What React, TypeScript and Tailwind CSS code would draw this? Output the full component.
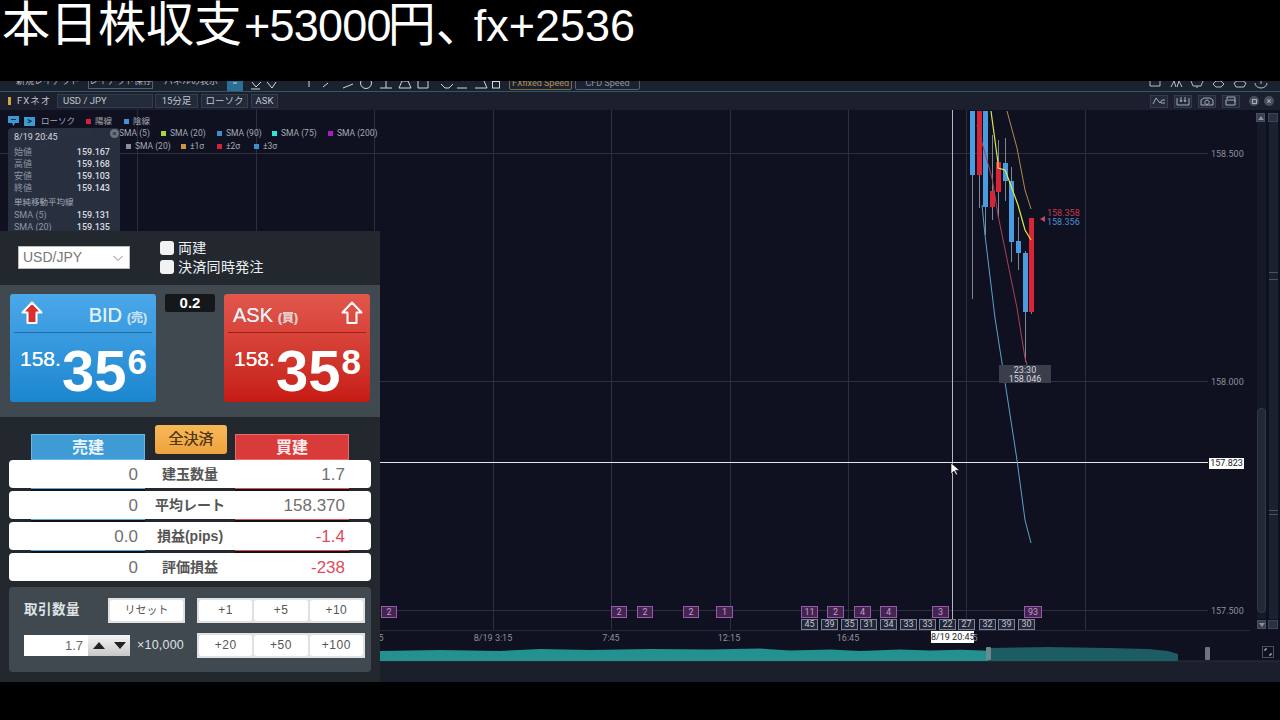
import React from "react";

const sans = "font-['Liberation_Sans','Noto_Sans_CJK_JP',sans-serif]";
const robo = "font-['Roboto','Noto_Sans_CJK_JP',sans-serif]";

const vlines = [137.5, 256.5, 374.5, 493.5, 611.5, 730.5, 848.5, 966.5, 1085.5];
const hlines = [153.5, 381.5, 610.5];
type C = [number, number, number, number, number, number, string];
const candles: C[] = [
  [972.5, 111, 299, 111, 175, 5, "b"],
  [979.5, 111, 208, 111, 175, 5, "r"],
  [985.5, 111, 235, 111, 207, 5, "b"],
  [992.5, 135, 220, 191, 207, 5, "r"],
  [998.5, 140, 217, 162, 192, 5, "r"],
  [1005.5, 138, 201, 163, 181, 5, "b"],
  [1011.5, 167, 262, 181, 242, 5, "b"],
  [1018.5, 217, 270, 241, 253, 5, "b"],
  [1025.5, 251, 362, 253, 312, 5, "b"],
  [1031.5, 218, 314, 218, 312, 5, "r"],
];
const purple: [number, string, number][] = [
  [381, "2", 16], [611, "2", 16], [637, "2", 16], [683, "2", 16], [716, "1", 17],
  [801, "11", 17], [827, "2", 17], [854, "4", 17], [880, "4", 17], [932, "3", 17], [1024, "93", 18],
];
const gray: [number, string][] = [
  [801, "45"], [821, "39"], [841, "35"], [860, "31"], [880, "34"], [900, "33"],
  [919, "33"], [939, "22"], [958, "27"], [979, "32"], [998, "39"], [1018, "30"],
];
const times: [number, string][] = [[381, "5"], [493, "8/19 3:15"], [611, "7:45"], [729, "12:15"], [848, "16:45"], [975, "5"]];
const prices: [number, string][] = [[154, "158.500"], [382, "158.000"], [611, "157.500"]];

function Legend({ c, t, w }: { c: string; t: string; w: number }) {
  return (
    <span className="flex items-center gap-[4px]" style={{ width: w }}>
      <i className="block w-[5px] h-[5px]" style={{ background: c }} />
      <span>{t}</span>
    </span>
  );
}

function Chart() {
  return (
    <>
      <svg className="absolute left-0 top-0" width="1280" height="572" viewBox="0 110 1280 572">
        {hlines.map((y) => <line key={y} x1="0" x2="1208" y1={y} y2={y} stroke="#2c2f3e" />)}
        {vlines.map((x) => <line key={x} x1={x} x2={x} y1="110" y2="630" stroke="#2c2f3e" />)}
        <line x1="380" x2="1250" y1="630.5" y2="630.5" stroke="#252836" />
        <line x1="952.5" x2="952.5" y1="110" y2="630" stroke="#b4b7be" />
        <line x1="380" x2="1208" y1="462.5" y2="462.5" stroke="#e4e6ea" />
        {candles.map(([x, wt, wb, bt, bb, w, k], i) => (
          <g key={i}>
            <line x1={x} x2={x} y1={wt} y2={wb} stroke="#7f8696" />
            <rect x={x - w / 2} y={bt} width={w} height={bb - bt} fill={k === "b" ? "#4a9be0" : "#db2336"} />
          </g>
        ))}
        <polyline fill="none" stroke="#a94352" points="977,125 992,178 998,215 1017,308 1025,358 1027,365" />
        <polyline fill="none" stroke="#5ba3c9" points="982,205 985,235 995,318 1007,395 1017,460 1025,520 1031,543" />
        <polyline fill="none" stroke="#b08a50" points="1007,111 1017,148 1025,190 1031,209" />
        <polyline fill="none" stroke="#dfe84a" strokeWidth="1.200" points="991,111 998,163 998,168 1005,170 1010,183 1018,205 1025,230 1031,240" />
        <polygon points="1040,219 1045,216 1045,222" fill="#c9475e" />
        <path d="M951 463v11l3-3 2 4 1.500-.8-2-4h4z" fill="#fff" stroke="#000" strokeWidth=".6" />
      </svg>

      {/* legend */}
      <div className={`absolute left-[8px] top-[5px] flex items-center h-[12px] text-[8.500px] text-[#a5a9b4] ${robo}`}>
        <svg width="11" height="10" viewBox="0 0 11 10"><path d="M0 0h11v7H7L5.500 10 4 7H0z" fill="#3b9ad1" /><path d="M3 3.500h5" stroke="#10243a" /></svg>
        <span className="ml-[5px] w-[11px] h-[9px] bg-[#3b9ad1] flex items-center justify-center text-[#10243a] text-[9px] leading-none font-bold">&gt;</span>
        <span className="ml-[6px] w-[45px]">ローソク</span>
        <Legend c="#d3213a" t="陽線" w={38} />
        <Legend c="#4a90d9" t="陰線" w={40} />
      </div>
      <div className={`absolute left-[40px] top-[17px] h-[13px] flex items-center text-[8.500px] text-[#a5a9b4] whitespace-nowrap ${robo}`}>
        <span className="w-[79px] text-[#4a4e5c]">単純移動平均</span>
        <span className="w-[42px]">SMA (5)</span>
        <Legend c="#a4d93a" t="SMA (20)" w={56} />
        <Legend c="#3a8fd0" t="SMA (90)" w={55} />
        <Legend c="#2fe6dc" t="SMA (75)" w={56} />
        <Legend c="#a41fc0" t="SMA (200)" w={60} />
      </div>
      <div className={`absolute left-[40px] top-[30px] h-[13px] flex items-center text-[8.500px] text-[#a5a9b4] whitespace-nowrap ${robo}`}>
        <span className="w-[86px] text-[#4a4e5c]">ボリンジャー</span>
        <Legend c="#8a8d96" t="SMA (20)" w={55} />
        <Legend c="#cc9440" t="±1σ" w={36} />
        <Legend c="#d3213a" t="±2σ" w={37} />
        <Legend c="#3a8fd0" t="±3σ" w={40} />
      </div>

      {/* hover tooltip */}
      <div className={`absolute left-[8px] top-[18px] w-[112px] h-[110px] bg-[#2a3141]/95 rounded-sm pl-[6px] pr-[10px] pt-[3px] text-[9px] text-[#8f95a3] ${robo}`}>
        <div className="flex justify-between items-center h-[13px] text-[#d5d8de]">
          <span>8/19 20:45</span>
        </div>
        <div className="mt-[3px] flex flex-col">
          {[["始値", "159.167"], ["高値", "159.168"], ["安値", "159.103"], ["終値", "159.143"]].map(([a, b]) => (
            <div key={a} className="flex justify-between items-center h-[12px]"><span>{a}</span><span className="text-[#d8dbe0] font-medium">{b}</span></div>
          ))}
        </div>
        <div className="h-[15px] flex items-center text-[#a6abb7] text-[8.500px]">単純移動平均線</div>
        <div className="flex justify-between items-center h-[12px]"><span>SMA (5)</span><span className="text-[#d8dbe0] font-medium">159.131</span></div>
        <div className="flex justify-between items-center h-[12px]"><span>SMA (20)</span><span className="text-[#d8dbe0] font-medium">159.135</span></div>
        <span className="absolute right-[1px] top-[1px] w-[9px] h-[9px] rounded-full bg-[#6b7280] text-[#1b2030] text-[8px] leading-[9px] text-center">×</span>
      </div>

      {/* live price labels */}
      <div className={`absolute left-[1047px] top-[99px] text-[9px] leading-[9px] ${robo}`}>
        <div className="text-[#c23a4e]">158.358</div>
        <div className="text-[#4d8fd0]">158.356</div>
      </div>
      <div className={`absolute left-[999px] top-[255px] w-[52px] h-[18px] pt-[1px] bg-[#3a3d4c] text-[#d5d7dc] text-[9px] leading-[9px] text-center ${robo}`}>
        <div>23:30</div><div>158.046</div>
      </div>

      {/* price axis */}
      {prices.map(([y, t]) => (
        <span key={t} className={`absolute left-[1211px] text-[9px] leading-[12px] text-[#8b8f9a] ${robo}`} style={{ top: y - 116 }}>{t}</span>
      ))}
      <span className={`absolute left-[1209px] top-[348px] w-[35px] h-[11px] bg-white text-[#1a1d2b] text-[9px] leading-[11px] text-center ${robo}`}>157.823</span>

      {/* badges */}
      {purple.map(([x, t, w], i) => (
        <span key={i} className={`absolute top-[496px] h-[12px] border border-[#9a58a8] bg-[#43264f] text-[#c996d2] text-[9px] leading-[10px] text-center ${robo}`} style={{ left: x, width: w }}>{t}</span>
      ))}
      {gray.map(([x, t], i) => (
        <span key={i} className={`absolute top-[509px] w-[17px] h-[11px] border border-[#7b8296] bg-[#23273a] text-[#c2c6d0] text-[9px] leading-[9px] text-center ${robo}`} style={{ left: x }}>{t}</span>
      ))}

      {/* time axis */}
      {times.map(([x, t]) => (
        <span key={x + t} className={`absolute top-[522px] text-[9px] leading-[12px] text-[#8b8f9a] -translate-x-1/2 ${robo}`} style={{ left: x }}>{t}</span>
      ))}
      <span className={`absolute left-[931px] top-[521px] w-[43px] h-[12px] bg-white text-[#1a1d2b] text-[9px] leading-[12px] text-center whitespace-nowrap ${robo}`}>8/19 20:45</span>

      {/* navigator */}
      <svg className="absolute left-0 top-[534px]" width="1280" height="38" viewBox="0 644 1280 38">
        <rect x="0" y="661" width="1280" height="21" fill="#1b1e2b" />
        <line x1="0" x2="1280" y1="661" y2="661" stroke="#2a3040" />
        <path d="M380 651l60-1 60 1 40-2 50 1 60-1 60 .5 50-1 30 2 40-1 30 1.500 40-1.500 30 1 30-.8 28 1V661H380z" fill="#22918f" />
        <path d="M988 648l60-1 60 1 40 1 20 2 10 3V661H988z" fill="#1c5c62" />
        <rect x="986" y="647" width="5" height="13" rx="1" fill="#6a8a90" />
        <rect x="1205" y="647" width="5" height="13" rx="1" fill="#6b7280" />
        <rect x="1262.500" y="646.500" width="11" height="11" fill="none" stroke="#4a5060" />
        <path d="M1265 651v-2h2M1271 653v2h-2" stroke="#c8ccd4" fill="none" />
      </svg>

      {/* scrollbars */}
      <div className="absolute left-[1256px] top-[3px] w-[9px] h-[9px] bg-[#3a3f4f] border border-[#4a5060] flex items-center justify-center"><i className="block border-x-[3px] border-x-transparent border-b-[4px] border-b-[#8a8f9c]" /></div>
      <div className="absolute left-[1268px] top-[3px] w-[10px] h-[9px] bg-[#2a3040] border border-[#3e4555]" />
      <div className="absolute left-[1257px] top-[12px] w-[9px] h-[497px] bg-[#161a28]">
        <div className="mt-[286px] h-[205px] bg-[#232836] border border-[#323848] rounded-sm" />
      </div>
      <div className="absolute left-[1269px] top-[12px] w-[9px] h-[497px] bg-[#1c2130]">
        <div className="mt-[150px] h-[8px] border-y border-[#4b5160]" />
        <div className="mt-[230px] h-[5px] border-y border-[#4b5160]" />
      </div>
      <div className="absolute left-[1257px] top-[510px] w-[9px] h-[9px] bg-[#3a3f4f] border border-[#4a5060] flex items-center justify-center"><i className="block border-x-[3px] border-x-transparent border-t-[4px] border-t-[#8a8f9c]" /></div>
      <div className="absolute left-[1268px] top-[510px] w-[10px] h-[9px] bg-[#2a3040] border border-[#3e4555]" />
    </>
  );
}

function Arrow({ fill }: { fill: string }) {
  return (
    <svg width="22" height="24" viewBox="0 0 22 24">
      <path d="M11 1.500 20.500 11.500H15.500V22H6.500V11.500H1.500z" fill={fill} stroke="#fff" strokeWidth="2" strokeLinejoin="round" />
    </svg>
  );
}

function Quote({ side, sub, d, arrow, cls, rule, head }: { side: string; sub: string; d: string; arrow: string; cls: string; rule: string; head: string }) {
  return (
    <div className={`w-[146px] h-[108px] rounded-[3px] px-[4px] flex flex-col ${cls} ${sans}`}>
      <div className={`h-[38px] flex items-center justify-between shrink-0 ${head}`}>
        <Arrow fill={arrow} />
        <span className="mt-[4px] text-[#e4f0f8] text-[20px] leading-none whitespace-nowrap [text-shadow:0_0_0.6px_#e4f0f8]">{side}<span className="ml-[5px] text-[12px] font-bold opacity-80">{sub}</span></span>
      </div>
      <div className={`h-px ${rule}`} />
      <div className="flex items-start text-white font-bold leading-none mt-[13px] whitespace-nowrap ml-[6px]">
        <span className="text-[21px] mt-[2px] leading-none font-normal [text-shadow:0_0_0.6px_#fff]">158.</span>
        <span className="text-[58px] leading-[50px] ml-[1px]">35</span>
        <span className="text-[35px] leading-[32px] ml-[1px]">{d}</span>
      </div>
    </div>
  );
}

function Row({ l, m, r, red }: { l: string; m: string; r: string; red?: boolean }) {
  return (
    <div className={`h-[28px] pt-px bg-white rounded-[4px] flex items-center text-[#707070] text-[17px] ${sans}`}>
      <span className="w-[129px] text-right">{l}</span>
      <span className="w-[104px] text-center text-[14px] font-bold text-[#555]">{m}</span>
      <span className={`w-[103px] text-right ${red ? "text-[#dc4c5c]" : ""}`}>{r}</span>
    </div>
  );
}

function Strip() {
  return (
    <div className="h-[3px] flex">
      <span className="ml-[22px] w-[114px] bg-[#101316] border-t border-[#58a8de]" />
      <span className="ml-[90px] w-[114px] bg-[#101316] border-t border-[#e0525a]" />
    </div>
  );
}

function BtnGroup({ items }: { items: string[] }) {
  return (
    <div className="w-[168px] h-[25px] shrink-0 bg-[#dfe1e2] p-[2px] grid grid-cols-3 gap-[2px]">
      {items.map((t) => (
        <span key={t} className="bg-white rounded-[3px] text-[#555] text-[12px] tracking-[0.5px] leading-[21px] text-center">{t}</span>
      ))}
    </div>
  );
}

function OrderPanel() {
  return (
    <div className={`absolute left-0 top-[121px] w-[380px] h-[451px] bg-[#22282e] flex flex-col ${sans}`}>
      <div className="h-[54px] shrink-0 flex pl-[18px]">
        <div className="mt-[15px] w-[112px] h-[23px] bg-white border border-[#bbb] flex items-center justify-between pl-[4px] pr-[5px] text-[#777] text-[14px]">
          <span>USD/JPY</span>
          <svg width="12" height="8" viewBox="0 0 12 8"><path d="M1.500 2 6 6.500 10.500 2" fill="none" stroke="#888" /></svg>
        </div>
        <div className="ml-[30px] mt-[10px] flex flex-col gap-[5px] text-[#eceff1] text-[14px] leading-[14px]">
          {["両建", "決済同時発注"].map((t) => (
            <div key={t} className="flex items-center gap-[4px]">
              <span className="w-[14px] h-[14px] bg-[#f2f2f2] rounded-[3px]" />
              <span className="tracking-[0.3px]">{t}</span>
            </div>
          ))}
        </div>
      </div>

      <div className="h-[132px] shrink-0 bg-[#40494f] pt-[9px] pl-[10px] flex">
        <Quote side="BID" sub="(売)" d="6" arrow="#d9302c" cls="bg-gradient-to-b from-[#4aa8ea] to-[#1a86cf]" rule="bg-[#1c6ea8]" head="pl-[7px] pr-[5px]" />
        <div className="ml-[9px] mr-[9px] w-[50px] h-[18px] bg-[#14181b] rounded-[2px] text-white text-[15px] font-bold leading-[18px] text-center">0.2</div>
        <Quote side="ASK" sub="(買)" d="8" arrow="#d9302c00" cls="bg-gradient-to-b from-[#e2564c] to-[#c51a14]" rule="bg-[#a81c16]" head="flex-row-reverse pl-[5px] pr-[3px]" />
      </div>

      <div className="flex-1 flex flex-col px-[9px]">
        <div className="h-[43px] shrink-0 flex items-end">
          <div className="ml-[22px] w-[114px] h-[26px] bg-[#3f9bd6] border border-[#6cb6e6] text-[#e8f3fa] text-[16px] font-bold text-center leading-[26px]">売建</div>
          <div className="ml-[10px] w-[72px] h-[29px] mb-[6px] rounded-[3px] bg-gradient-to-b from-[#f8b858] to-[#eda33c] text-[#4f3a16] text-[15px] text-center leading-[28px] [text-shadow:0_0_0.6px_#4f3a16]">全決済</div>
          <div className="ml-[8px] w-[114px] h-[26px] bg-[#d93a3a] border border-[#ea6a6a] text-[#fbeaea] text-[16px] font-bold text-center leading-[26px]">買建</div>
        </div>
        <Row l="0" m="建玉数量" r="1.7" />
        <Strip />
        <Row l="0" m="平均レート" r="158.370" />
        <Strip />
        <Row l="0.0" m="損益(pips)" r="-1.4" red />
        <Strip />
        <Row l="0" m="評価損益" r="-238" red />
        <div className="mt-[6px] h-[85px] bg-[#40494f] rounded-[4px] pl-[15px] pr-[6px] pt-[11px] flex flex-col gap-[10px]">
          <div className="flex items-center h-[25px]">
            <span className="w-[84px] shrink-0 text-[#dfe2e4] text-[13.500px] font-bold tracking-[0.5px]">取引数量</span>
            <span className="w-[77px] h-[25px] shrink-0 bg-[#dfe1e2] p-[2px]"><span className="block h-full bg-white rounded-[3px] text-[#555] text-[11px] leading-[21px] text-center">リセット</span></span>
            <span className="ml-[12px]"><BtnGroup items={["+1", "+5", "+10"]} /></span>
          </div>
          <div className="flex items-center h-[25px]">
            <span className="w-[64px] h-[21px] shrink-0 bg-white text-[#666] text-[13px] leading-[21px] text-right pr-[5px]">1.7</span>
            <span className="w-[21px] h-[21px] shrink-0 bg-gradient-to-b from-[#f5f5f5] to-[#c8c8c8] flex items-center justify-center"><i className="block border-x-[6px] border-x-transparent border-b-[7px] border-b-[#222]" /></span>
            <span className="w-[21px] h-[21px] shrink-0 bg-gradient-to-b from-[#f5f5f5] to-[#c8c8c8] flex items-center justify-center"><i className="block border-x-[6px] border-x-transparent border-t-[7px] border-t-[#222]" /></span>
            <span className="ml-[7px] w-[60px] shrink-0 text-[#dfe2e4] text-[12.500px] tracking-[0.2px] whitespace-nowrap">×10,000</span>
            <BtnGroup items={["+20", "+50", "+100"]} />
          </div>
        </div>
      </div>
    </div>
  );
}

function HeadIcon({ d }: { d: string }) {
  return (
    <span className="w-[18px] h-[13px] bg-[#232a3a] border border-[#343c4e] flex items-center justify-center">
      <svg width="14" height="10" viewBox="0 0 14 10"><path d={d} fill="none" stroke="#a5abb8" /></svg>
    </span>
  );
}

export default function App() {
  return (
    <div className="w-[1280px] h-[720px] bg-black overflow-hidden flex flex-col">
      <div className="h-[81px] shrink-0 pl-[2px] text-white text-[48px] leading-[40px] font-['Noto_Sans_CJK_JP',sans-serif] whitespace-nowrap flex items-baseline">
        <span>本日株収支</span>
        <span className="font-['Liberation_Sans',sans-serif] text-[45px] tracking-[-0.8px] ml-[2px]">+53000</span>
        <span className="ml-[-3px]">円、</span>
        <span className="font-['Liberation_Sans',sans-serif] text-[45px] ml-[-10px]">fx+2536</span>
      </div>

      {/* toolbar (its upper part is hidden by the black band) */}
      <div className={`h-[10px] shrink-0 bg-[#1c2130] overflow-hidden flex items-end text-[9px] leading-[14px] text-[#aeb3bd] whitespace-nowrap ${robo}`}>
        <span className="ml-[16px] mb-[3px] w-[72px] h-[14px] shrink-0">新規レイアウト</span>
        <span className="mb-[2px] w-[65px] h-[16px] shrink-0 border border-[#5a6070] text-center">レイアウト保存</span>
        <span className="ml-[11px] mb-[3px] w-[63px] h-[14px] shrink-0">パネルの表示</span>
        <svg className="shrink-0" width="273" height="10" viewBox="0 0 273 10">
          <rect x="0" y="0" width="16" height="10" fill="#2a6f94" />
          <g fill="none" stroke="#d4d7dc">
            <path d="M6 2h4M25 1l4 5 5-5M24 8h9M40 1l5 6 4-6" />
            <path d="M82 0v6M96 6l5-4M116 7l10-4" />
            <circle cx="139" cy="2" r="5.500" />
            <path d="M153 7h12M159 0v7M172 7h12l-3-7h-6zM191 0v7h10V0M214 3l4 4h4l4-4M230 7h10M248 7h12l-3-7" />
            <rect x="265.500" y=".5" width="7" height="6.500" />
          </g>
        </svg>
        <span className="ml-[9px] mb-[1px] w-[63px] h-[15px] shrink-0 border border-[#7c6a42] rounded-[2px] text-center text-[#b0935a]">FXfixed Speed</span>
        <span className="ml-[3px] mb-[1px] w-[65px] h-[15px] shrink-0 border border-[#5a6070] rounded-[2px] text-center text-[#8d93a0]">CFD Speed</span>
        <svg className="ml-auto mr-[8px] shrink-0" width="135" height="10" viewBox="0 0 135 10">
          <g fill="none" stroke="#b8bcc4">
            <path d="M13 0v5h10V0M34 6l3-6 2 6M40 6l2-6 3 6M54 0l2 5h8l2-5M60 5v2M76 3l3 3h5l3-3-3-3h-5zM97 2l2 4h8l2-4-3-2h-6zM118 2a6 5 0 0 0 12 0M124 0v3" />
          </g>
        </svg>
      </div>

      {/* panel header */}
      <div className={`h-[19px] shrink-0 bg-[#1c1f2e] border-t border-[#2d5a66] flex items-center text-[9.500px] text-[#c2c6ce] ${robo}`}>
        <i className="ml-[8px] w-[3px] h-[8px] bg-[#d6a63e]" />
        <span className="ml-[6px] w-[40px] tracking-[1px]">FXネオ</span>
        <span className="w-[96px] h-[14px] bg-[#232a3a] border border-[#343c4e] pl-[5px] leading-[12px]">USD / JPY</span>
        <span className="ml-[2px] w-[43px] h-[14px] bg-[#232a3a] border border-[#343c4e] text-center leading-[12px]">15分足</span>
        <span className="ml-[3px] w-[47px] h-[14px] bg-[#232a3a] border border-[#343c4e] text-center leading-[12px]">ローソク</span>
        <span className="ml-[3px] w-[27px] h-[14px] bg-[#232a3a] border border-[#343c4e] text-center leading-[12px]">ASK</span>
        <div className="ml-auto flex items-center gap-[6px]">
          <HeadIcon d="M1 8 4 2l4 5 2-3h3M9 7h4" />
          <HeadIcon d="M1 2v7h12V2M5 1v4M9 1v4M4 4l1 2 1-2M8 4l1 2 1-2" />
          <HeadIcon d="M1 9V4l3-2h6l3 2v5zM7 4a2.200 2.200 0 1 0 .01 0" />
          <HeadIcon d="M3 3V1h8v5M2 4h9v5H2z" />
          <span className="ml-[3px] w-[10px] h-[10px] rounded-full bg-[#4b505d] flex items-center justify-center"><i className="block w-[5px] h-[5px] border border-[#a5abb8]" /></span>
          <span className="ml-[-1px] mr-[6px] w-[10px] h-[10px] rounded-full bg-[#4b505d] text-[#b8bcc4] text-[9px] leading-[10px] text-center">×</span>
        </div>
      </div>

      <div className="relative h-[572px] shrink-0 bg-[#0f1120]">
        <Chart />
        <OrderPanel />
      </div>
    </div>
  );
}
